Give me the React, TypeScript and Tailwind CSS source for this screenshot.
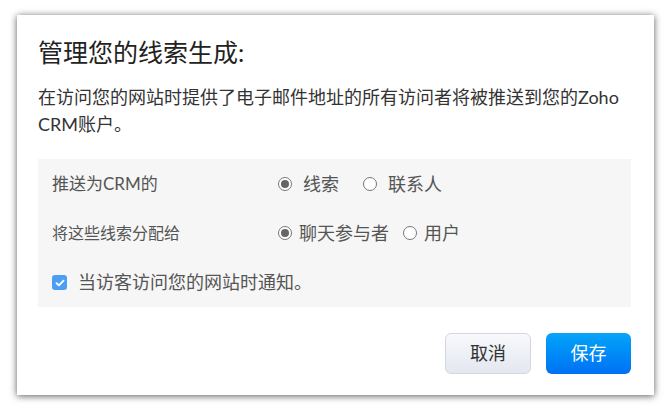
import React from "react";

function Radio({ checked }: { checked?: boolean }) {
  return (
    <span className="inline-flex items-center justify-center w-[14px] h-[14px] rounded-full border border-[#777] bg-white shrink-0">
      {checked && <span className="w-[8px] h-[8px] rounded-full bg-[#666]" />}
    </span>
  );
}

export default function App() {
  return (
    <div className="w-[671px] h-[410px] bg-white pt-[15px] pl-[17px] font-['Lato','Noto_Sans_CJK_SC',sans-serif]">
      <div className="w-[637px] h-[380px] bg-white shadow-[0_1px_7px_rgba(0,0,0,0.65)] pl-[21px] pr-[23px] pt-[21px]">
        <h1 className="text-[25px] leading-[32px] text-[#222]">管理您的线索生成:</h1>
        <p className="mt-[16px] text-[18px] leading-[27px] text-[#333]">
          在访问您的网站时提供了电子邮件地址的所有访问者将被推送到您的Zoho CRM账户。
        </p>

        <div className="mt-[21px] h-[148px] bg-[#f6f6f6] pl-[14px] pt-[12px] text-[#555]">
          <div className="flex items-center h-[26px]">
            <span className="w-[226px] text-[17px]">推送为CRM的</span>
            <label className="flex items-center gap-[11px] text-[18px]">
              <Radio checked />
              <span>线索</span>
            </label>
            <label className="ml-[24px] flex items-center gap-[11px] text-[18px]">
              <Radio />
              <span>联系人</span>
            </label>
          </div>

          <div className="mt-[23px] flex items-center h-[26px]">
            <span className="w-[226px] text-[16px]">将这些线索分配给</span>
            <label className="flex items-center gap-[7px] text-[18px]">
              <Radio checked />
              <span>聊天参与者</span>
            </label>
            <label className="ml-[14px] flex items-center gap-[7px] text-[18px]">
              <Radio />
              <span>用户</span>
            </label>
          </div>

          <label className="mt-[23px] flex items-center gap-[11px] text-[18px]">
            <span className="flex items-center justify-center w-[15px] h-[15px] rounded-[3px] bg-[#4a9ff5]">
              <svg width="10" height="8" viewBox="0 0 10 8" fill="none">
                <path d="M1.5 4.2 L3.9 6.3 L8.5 1.6" stroke="white" strokeWidth="1.8" strokeLinecap="round" strokeLinejoin="round" />
              </svg>
            </span>
            <span>当访客访问您的网站时通知。</span>
          </label>
        </div>

        <div className="mt-[26px] flex justify-end gap-[15px]">
          <button className="w-[86px] h-[41px] rounded-[6px] border border-[#d3d7e0] bg-gradient-to-b from-[#f8f9fc] to-[#e3e7ef] text-[18px] text-[#333]">
            取消
          </button>
          <button className="w-[85px] h-[41px] rounded-[6px] bg-gradient-to-b from-[#0aa4f9] to-[#0070f4] text-[18px] text-white">
            保存
          </button>
        </div>
      </div>
    </div>
  );
}
